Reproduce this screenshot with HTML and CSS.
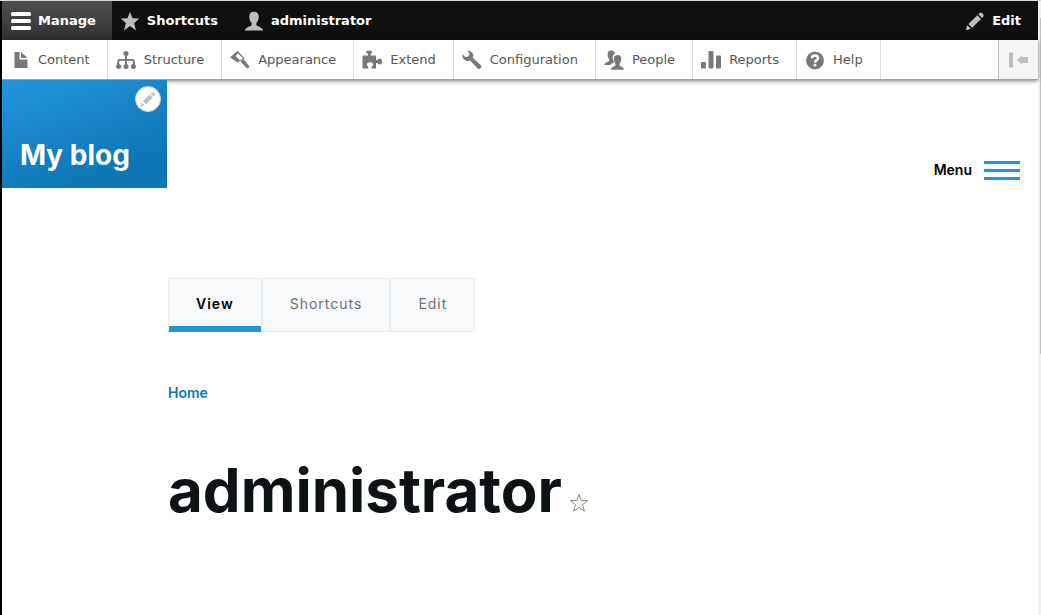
FILE: index.html
```html
<!DOCTYPE html>
<html lang="en">
<head>
<meta charset="utf-8">
<meta name="viewport" content="width=device-width, initial-scale=1">
<title>administrator | My blog</title>
<link rel="stylesheet" href="styles.css">
</head>
<body>
<div class="edge"></div>
<div class="page">
  <nav class="bar" aria-label="Administration toolbar">
    <button class="bar-item active" type="button">
      <svg class="icon" viewBox="0 0 20 20" fill="#fff"><rect y="1" width="20" height="4" rx="1.5"/><rect y="8" width="20" height="4" rx="1.5"/><rect y="15" width="20" height="4" rx="1.5"/></svg>Manage</button>
    <a class="bar-item" href="#">
      <svg class="icon" viewBox="0 0 20 20" fill="#bebebe"><path d="M10 .8l2.500 6.500 6.900.2-5.300 4.400 1.900 7.500-6-4.300-6 4.300 1.900-7.500L.6 7.500l6.900-.2z"/></svg>Shortcuts</a>
    <a class="bar-item user" href="#">
      <svg class="icon" viewBox="0 0 20 20" fill="#bebebe"><path d="M10 .8c3 0 4.800 1.900 4.800 5 0 2.600-1 4.800-2.400 6v2.200c0 1.400 6.100 1.600 6.800 5.500H.8c.7-3.900 6.800-4.100 6.800-5.500v-2.200c-1.400-1.200-2.400-3.400-2.400-6 0-3.100 1.800-5 4.800-5z"/></svg>administrator</a>
    <button class="bar-item edit" type="button">
      <svg class="icon" viewBox="0 0 20 20" fill="#bebebe"><path d="M14.300 2.300q1.400-1.400 2.900-.1l1 1.100q1.200 1.400-.1 2.700l-1 1-3.800-3.800zM12.300 4.300L16 8l-8.800 8.700-3.900-3.800zM2.300 14.300l3.500 3.500-3.900 1.500-1-1z"/></svg>Edit</button>
  </nav>
  <nav class="tray" aria-label="Administration menu">
    <a class="tray-item" href="#"><svg class="icon" viewBox="0 0 20 20"><path d="M4.500 2h5v7.500h8V18h-13zM11 2l6.500 6H11z"/></svg>Content</a>
    <a class="tray-item" href="#"><svg class="icon" viewBox="0 0 20 20"><circle cx="10" cy="3.500" r="2.500"/><path d="M9 4h2v5h5.500q2.300 0 2.300 2.300V15h-2v-3.200q0-1-1-1H11V15H9v-4.200H4.200q-1 0-1 1V15h-2v-3.700Q1.200 9 3.500 9H9z"/><circle cx="2.600" cy="16.500" r="2.500"/><circle cx="10" cy="16.500" r="2.500"/><circle cx="17.400" cy="16.500" r="2.500"/></svg>Structure</a>
    <a class="tray-item" href="#"><svg class="icon" viewBox="0 0 20 20"><path d="M7.500.8l7.300 7.600-7.500 4.200L.2 7.200zM8 3.500L5.500 6 9.700 10.300l3.500-2z" fill-rule="evenodd"/><path d="M10.500 11.500l3-2.500 5.400 6.700q.6 1-.3 2t-2 .2z"/></svg>Appearance</a>
    <a class="tray-item" href="#"><svg class="icon" viewBox="0 0 20 20"><path d="M.5 5.500h5.500V4Q4 3.400 4.200.9q3-.7 6.100 0 .2 2.500-1.800 3.100v1.500H14v4.500h1.500q.8-1.500 2.300-1.500 2.200 0 2.200 3t-2.200 3q-1.500 0-2.300-1.500H14v5.500H9.700v-2q1.300-.7 1.300-2 0-2.300-3-2.300t-3 2.300q0 1.300 1.300 2v2H.5z"/></svg>Extend</a>
    <a class="tray-item" href="#"><svg class="icon" viewBox="0 0 20 20"><path d="M5 .8q3.700-.5 5.600 2.500 1.300 2 .1 4.400l7.900 7.200q1.500 1.700.1 3.300-1.700 1.500-3.300.1l-7.200-7.900q-2.300 1.200-4.800 0Q0 8.400.4 4.300l3 2.700 3.400-.8.600-3z"/></svg>Configuration</a>
    <a class="tray-item" href="#"><svg class="icon" viewBox="0 0 20 20"><path d="M7.200.6c2.200 0 3.600 1.100 3.800 3.200-1.900.9-2.500 2.800-2.200 5 .2 1.300.7 2.200 1.400 3-.8 1.500-3.200 1.400-4 3.200H.4c.3-3.300 4.800-3.200 4.800-4.600V9.300C4.200 8.300 3.600 6.500 3.600 4.500 3.600 2.200 4.700.6 7.200.6z"/><path d="M13.600 5c2.400 0 3.700 1.400 3.700 3.800 0 1.800-.6 3.300-1.700 4.400v1.700c0 1.600 4.200 1.400 4.400 4.800H6.800c.2-3.400 4.700-3.200 4.700-4.800v-1.700c-1.100-1.100-1.700-2.600-1.700-4.400C9.800 6.400 11.200 5 13.600 5z"/></svg>People</a>
    <a class="tray-item" href="#"><svg class="icon" viewBox="0 0 20 20"><rect y="12" width="5" height="6.500" rx="1"/><rect x="7.500" y="1" width="5" height="17.500" rx="1"/><rect x="15" y="5.500" width="5" height="13" rx="1"/></svg>Reports</a>
    <a class="tray-item" href="#"><svg class="icon" viewBox="0 0 20 20"><circle cx="10" cy="10.500" r="8.900"/><path d="M7 8.200q0-2.800 3-2.800t3 2.800q0 1.300-1.700 2.200-1.300.8-1.300 2.100" fill="none" stroke="#fff" stroke-width="2.500"/><rect x="8.700" y="13.800" width="2.600" height="2.600" fill="#fff"/></svg>Help</a>
    <button class="orient" type="button" aria-label="Vertical orientation"><svg class="icon" viewBox="0 0 20 20"><path d="M0 2.500h4v15H0zM8 10l5-4.500V7h6v6h-6v1.500z"/></svg></button>
  </nav>
  <header class="header">
    <div class="brand">
      <a class="brand-name" href="#">My blog</a>
      <button class="contextual" type="button" aria-label="Open configuration options"><svg class="pencil" viewBox="0 0 20 20"><path d="M14.300 2.300q1.400-1.400 2.900-.1l1 1.100q1.200 1.400-.1 2.700l-1 1-3.800-3.800zM12.300 4.300L16 8l-8.800 8.700-3.900-3.800zM2.300 14.300l3.500 3.500-3.900 1.500-1-1z"/></svg></button>
    </div>
    <button class="menu" type="button">Menu<span class="lines"><span class="line"></span><span class="line"></span><span class="line"></span></span></button>
  </header>
  <main class="main">
    <nav class="tabs" aria-label="Primary tabs">
      <a class="tab current" href="#">View</a>
      <a class="tab" href="#">Shortcuts</a>
      <a class="tab" href="#">Edit</a>
    </nav>
    <nav class="crumbs" aria-label="Breadcrumb"><a href="#">Home</a></nav>
    <div class="title">
      <h1>administrator</h1>
      <button class="star" type="button" aria-label="Add to shortcuts"><svg viewBox="0 0 20 20" width="20" height="20"><path d="M10 1.500l2.200 6h6.500l-5.200 4.200 2 6.500-5.500-3.800-5.500 3.800 2-6.500L1.300 7.500h6.500z" fill="#fff" stroke="#8b887a"/></svg></button>
    </div>
  </main>
</div>
<div class="scroll"><div class="thumb"></div></div>
</body>
</html>
```
FILE: styles.css
```css
* { box-sizing: border-box; }
body {
  margin: 0;
  min-height: 100vh;
  display: flex;
  background: #fff;
  border-top: 1px solid #d5d9d8;
  font-family: Inter, sans-serif;
}
a { color: inherit; text-decoration: none; }
button { margin: 0; padding: 0; border: 0; background: none; font: inherit; color: inherit; cursor: pointer; }
svg { display: block; flex: none; }
.edge { width: 2px; background: #000; }
.page { flex: 1; min-width: 0; }
.icon { width: 20px; height: 20px; }

.bar {
  display: flex;
  height: 39px;
  background: #0f0f0f;
  color: #fff;
  font: bold 13px "DejaVu Sans", sans-serif;
}
.bar-item { display: flex; align-items: center; gap: 7px; padding: 0 17px 0 8px; }
.bar-item.active { padding-left: 9px; padding-right: 16px; background: linear-gradient(#505050, #303030); }
.bar-item.user { padding-left: 9px; }
.bar-item.edit { margin-left: auto; }

.tray {
  position: relative;
  display: flex;
  height: 40px;
  background: #fff;
  border-bottom: 1px solid #a0a0a0;
  box-shadow: 0 1px 4px rgba(0, 0, 0, 0.5);
  color: #565656;
  font: 13px "DejaVu Sans", sans-serif;
}
.tray .icon { fill: #787878; }
.tray-item {
  display: flex;
  align-items: center;
  gap: 8px;
  padding: 0 17px 0 8px;
  border-right: 1px solid #ddd;
}
.tray .orient {
  width: 40px;
  margin-left: auto;
  padding: 0 10px;
  background: #f5f5f5;
  border-left: 1px solid #c0c0c0;
}
.tray .orient .icon { fill: #bebebe; }

.header { display: flex; align-items: flex-start; justify-content: space-between; padding-right: 18px; }
.brand {
  position: relative;
  padding: 57px 37px 15px 18px;
  background: linear-gradient(160deg, #2494db 0%, #0d77b5 79%);
  color: #fff;
}
.brand-name { display: block; font-size: 28px; line-height: 36px; font-weight: 700; }
.contextual {
  position: absolute;
  top: 6px;
  right: 6px;
  display: grid;
  place-items: center;
  width: 26px;
  height: 26px;
  border: 1px solid #ccc;
  border-radius: 50%;
  background: #fff;
}
.pencil { width: 16px; height: 16px; fill: #bebebe; }
.menu {
  display: flex;
  align-items: center;
  gap: 12px;
  padding-top: 80px;
  color: #000;
  font-size: 14px;
  line-height: 20px;
  font-weight: 600;
}
.lines { display: grid; gap: 5px; width: 36px; }
.line { height: 3px; background: #2494db; }

.main { padding: 90px 18px 0 166px; }
.tabs { display: flex; }
.tab {
  padding: 0 27px 2px;
  border: 1px solid #e7edf1;
  background: #f7f9fa;
  color: #6e7172;
  font-size: 14px;
  line-height: 50px;
  letter-spacing: 1px;
}
.tab.current {
  color: #000;
  font-weight: 600;
  box-shadow: inset 0 -5px #2494db;
  border-bottom-color: #2494db;
}
.crumbs { margin-top: 51px; color: #0d77b5; font-size: 14px; line-height: 20px; font-weight: 600; }
.title { display: flex; align-items: flex-end; gap: 7px; margin-top: 51px; }
h1 { margin: 0; color: #0d1214; font-size: 60px; line-height: 72px; font-weight: 700; }
.star { padding-bottom: 13px; }

.scroll { width: 3px; padding: 17px 0 0 2px; background: #f1f1f1; }
.thumb { height: 336px; background: #c1c1c1; }
```
